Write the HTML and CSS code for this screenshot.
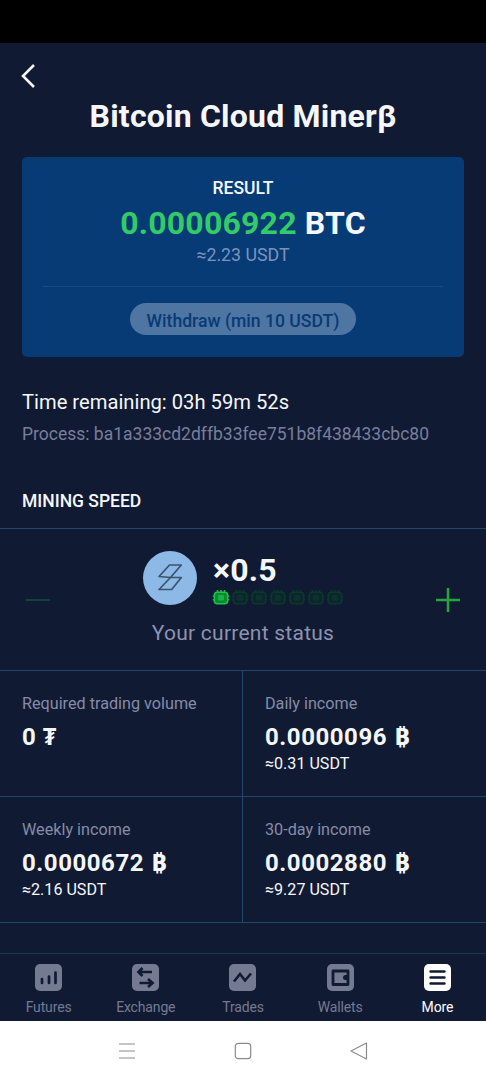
FILE: index.html
```html
<!DOCTYPE html>
<html lang="en">
<head>
<meta charset="utf-8">
<title>Bitcoin Cloud Miner</title>
<link rel="stylesheet" href="styles.css">
</head>
<body>
<svg class="defs" aria-hidden="true">
  <symbol id="chip" viewBox="0 0 18 18">
    <path d="M5.500 1v2M9 1v2M12.500 1v2" fill="none" stroke="currentColor" stroke-width="1.500"/>
    <rect x="2.300" y="3.200" width="13.400" height="11.500" rx="3" stroke="currentColor" stroke-width="1.500"/>
    <path d="M1.300 6.500V8M1.300 10v1.500M16.700 6.500V8M16.700 10v1.500" fill="none" stroke="currentColor" stroke-width="1"/>
    <rect class="chip-core" x="6" y="6" width="6" height="5.500" rx="1"/>
  </symbol>
</svg>
<div class="status-bar"></div>
<main class="screen">
  <header class="header">
    <svg class="back" viewBox="0 0 16 26"><path d="M14 2 3 13l11 11" fill="none" stroke="currentColor" stroke-width="2.600"/></svg>
    <h1 class="title">Bitcoin Cloud Minerβ</h1>
  </header>

  <section class="result">
    <div class="result-label">RESULT</div>
    <div class="result-amount"><span class="green">0.00006922</span> <span class="unit">BTC</span></div>
    <div class="result-usdt">≈2.23 USDT</div>
    <div class="result-line"></div>
    <button class="withdraw"><span>Withdraw (min 10 USDT)</span></button>
  </section>

  <section class="process">
    <div class="time"><span>Time remaining: 03h 59m 52s</span></div>
    <div class="hash"><span>Process: ba1a333cd2dffb33fee751b8f438433cbc80</span></div>
  </section>

  <h2 class="section-title"><span>MINING SPEED</span></h2>
  <section class="speed">
    <svg class="minus" viewBox="0 0 26 26"><path d="M1 13h24" stroke="currentColor" stroke-width="2"/></svg>
    <div class="speed-body">
      <div class="speed-top">
        <svg class="coin" viewBox="0 0 54 54">
          <circle cx="27" cy="27" r="27" fill="#8cb9e6"/>
          <path d="M26.500 14H38.300L27.500 26.500 16 25.500zM27.500 26.500H38.300L28.700 38.500H16z" fill="none" stroke="#3b536f" stroke-width="1.700" stroke-linejoin="round"/>
        </svg>
        <div>
          <div class="rate">×0.5</div>
          <div class="chips">
            <svg class="chip on"><use href="#chip"/></svg><svg class="chip"><use href="#chip"/></svg><svg class="chip"><use href="#chip"/></svg><svg class="chip"><use href="#chip"/></svg><svg class="chip"><use href="#chip"/></svg><svg class="chip"><use href="#chip"/></svg><svg class="chip"><use href="#chip"/></svg>
          </div>
        </div>
      </div>
      <div class="speed-status"><span>Your current status</span></div>
    </div>
    <svg class="plus" viewBox="0 0 26 26"><path d="M1 13h24M13 1v24" stroke="currentColor" stroke-width="2.500"/></svg>
  </section>

  <section class="stats">
    <div class="stat"><div class="stat-label">Required trading volume</div><div class="stat-value">0 ₮</div></div>
    <div class="stat"><div class="stat-label">Daily income</div><div class="stat-value">0.0000096 <span class="coin-sign">₿</span></div><div class="stat-usdt">≈0.31 USDT</div></div>
    <div class="stat"><div class="stat-label">Weekly income</div><div class="stat-value">0.0000672 <span class="coin-sign">₿</span></div><div class="stat-usdt">≈2.16 USDT</div></div>
    <div class="stat"><div class="stat-label">30-day income</div><div class="stat-value">0.0002880 <span class="coin-sign">₿</span></div><div class="stat-usdt">≈9.27 USDT</div></div>
  </section>
</main>

<nav class="tabs">
  <div class="tab">
    <svg class="tab-icon" viewBox="0 0 27 27"><rect width="27" height="27" rx="5" fill="currentColor"/><path d="M7 15v4M14 12.500V19M20.500 8.500V19" fill="none" stroke="#111a33" stroke-width="2.700" stroke-linecap="round"/></svg>
    <span>Futures</span>
  </div>
  <div class="tab">
    <svg class="tab-icon" viewBox="0 0 27 27"><rect width="27" height="27" rx="5" fill="currentColor"/><path d="M20 8H7M10.500 4 6.500 8l4 4M7.500 19H20M16 15l4.500 4-4.500 4" fill="none" stroke="#111a33" stroke-width="2.700"/></svg>
    <span>Exchange</span>
  </div>
  <div class="tab">
    <svg class="tab-icon" viewBox="0 0 27 27"><rect width="27" height="27" rx="5" fill="currentColor"/><path d="m5 17.500 6-7.500 5 6.500 6-7" fill="none" stroke="#111a33" stroke-width="2.600"/></svg>
    <span>Trades</span>
  </div>
  <div class="tab">
    <svg class="tab-icon" viewBox="0 0 27 27"><rect width="27" height="27" rx="5" fill="currentColor"/><path d="M21 11V7H6v13.500h15V16" fill="none" stroke="#111a33" stroke-width="2.800" stroke-linejoin="round"/><path d="M22.400 11H18.500a2.500 2.500 0 0 0 0 5h3.900z" fill="#111a33"/></svg>
    <span>Wallets</span>
  </div>
  <div class="tab active">
    <svg class="tab-icon" viewBox="0 0 27 27"><rect width="27" height="27" rx="5" fill="currentColor"/><path d="M6.500 7.500h14M6.500 13.500h14M6.500 19.500h14" fill="none" stroke="#111a33" stroke-width="2.400" stroke-linecap="round"/></svg>
    <span>More</span>
  </div>
</nav>

<footer class="system">
  <svg viewBox="0 0 18 18"><path d="M1 2h16M1 9h16M1 16h16" fill="none" stroke="#8b8b8b" stroke-width="1.200"/></svg>
  <svg viewBox="0 0 18 18"><rect x="1.300" y="1.300" width="15.400" height="15.400" rx="3" fill="none" stroke="#8b8b8b" stroke-width="1.200"/></svg>
  <svg viewBox="0 0 18 18"><path d="M16.500 1v16L1 9z" fill="none" stroke="#8b8b8b" stroke-width="1.200" stroke-linejoin="round"/></svg>
</footer>
</body>
</html>
```
FILE: styles.css
```css
* { box-sizing: border-box; }
body {
  margin: 0;
  width: 486px;
  height: 1080px;
  overflow: hidden;
  display: flex;
  flex-direction: column;
  background: #111a33;
  color: #f5f7fb;
  font-family: Roboto, "Noto Sans", "DejaVu Sans", sans-serif;
  white-space: nowrap;
}
.defs { width: 0; height: 0; position: absolute; }
.status-bar { height: 43px; background: #000; flex: none; }
.screen { height: 910px; flex: none; }
.header { height: 114px; padding-top: 20px; }
.back { display: block; width: 16px; height: 26px; margin-left: 20px; }
.title { margin: 8px 0 0; font-size: 32px; letter-spacing: .2px; line-height: 38px; font-weight: 700; text-align: center; }

.result {
  height: 200px;
  margin: 0 22px;
  padding: 20px 21px 0;
  border-radius: 5px;
  background: #073b75;
  text-align: center;
}
.result-label { font-size: 17.5px; line-height: 22px; font-weight: 500; }
.result-amount { font-size: 32px; letter-spacing: .2px; line-height: 40px; margin-top: 4px; font-weight: 700; }
.green { color: #32cb68; }
.result-usdt { margin-top: 1px; font-size: 17.8px; line-height: 22px; color: #7894bb; font-weight: 400; }
.result-line { margin-top: 20px; height: 1px; background: #174a81; }
.withdraw {
  width: 226px;
  height: 32px;
  margin-top: 16px;
  padding: 3px 0 0;
  border: 0;
  border-radius: 16px;
  background: #4f75a2;
  color: #073b75;
  font: 500 17.6px/30px Roboto, sans-serif;
}
.process { padding: 32px 22px 0; height: 129px; }
.time { font-size: 20.2px; line-height: 26px; }
.hash { font-size: 17.5px; line-height: 22px; margin-top: 8px; color: #777f9b; }
.section-title { height: 42px; margin: 0; padding: 4px 22px; font-size: 17.5px; line-height: 22px; font-weight: 500; }
.speed {
  height: 143px;
  padding: 0 25px;
  display: flex;
  justify-content: space-between;
  align-items: center;
  border-top: 1px solid #244468;
  border-bottom: 1px solid #244468;
}
.minus, .plus { width: 26px; height: 26px; }
.minus { color: #12423f; }
.plus { color: #24a63a; }
.speed-body { height: 100%; padding-top: 22px; }
.speed-top { display: flex; gap: 16px; padding-left: 1px; }
.coin { width: 54px; height: 54px; }
.rate { font-size: 32px; letter-spacing: .2px; line-height: 38px; font-weight: 700; }
.chips { display: flex; gap: 1px; margin-left: -1px; }
.chip { width: 18px; height: 18px; color: #083a28; fill: #0e242f; }
.chip-core { fill: currentColor; opacity: .75; }
.chip.on { color: #20be4e; fill: #078b2d; }
.speed-status { margin-top: 12px; font-size: 21px; letter-spacing: .25px; line-height: 28px; color: #8d93ae; text-align: center; }
.stats { display: grid; grid-template-columns: 243px 243px; grid-template-rows: 126px 126px; }
.stat { padding: 21px 22px 0; border-bottom: 1px solid #244468; }
.stat:nth-child(odd) { border-right: 1px solid #244468; }
.stat-label { font-size: 16.2px; line-height: 24px; color: #858ca6; }
.stat-value { margin-top: 6px; font-size: 24px; line-height: 30px; font-weight: 700; letter-spacing: .55px; }
.coin-sign { display: inline-block; transform: scaleX(1.15); transform-origin: left; }
.stat-usdt { margin-top: 2px; font-size: 16.1px; line-height: 20px; }
.tabs {
  height: 68px;
  flex: none;
  display: grid;
  grid-template-columns: repeat(5, 1fr);
  border-top: 1px solid #1d3855;
}
.tab { display: flex; flex-direction: column; align-items: center; padding-top: 10px; color: #747a92; font-size: 14px; letter-spacing: -.15px; line-height: 18px; }
.tab.active { color: #fff; }
.tab-icon { width: 27px; height: 27px; margin-bottom: 7px; }
.system { height: 59px; flex: none; background: #fff; display: flex; justify-content: center; align-items: center; gap: 98px; }
.system svg { width: 18px; height: 18px; }
```
